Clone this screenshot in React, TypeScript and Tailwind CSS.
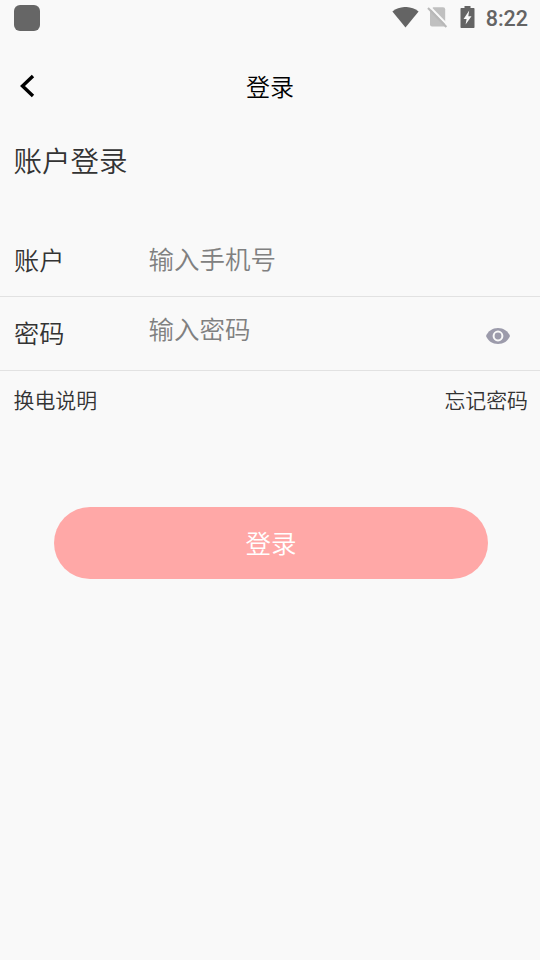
import { useState } from "react";

function StatusBar() {
  return (
    <div className="flex h-9 items-center justify-between pl-3.5 pr-3 text-[#646464]">
      <div className="h-[26px] w-[26px] rounded-md bg-[#666666]" />

      <div className="flex items-center">
        {/* wifi */}
        <svg className="mb-0.5" width="27" height="21" viewBox="0 0 27 21" fill="currentColor">
          <path d="M0.4 4.4C8 -1.5 19 -1.5 26.6 4.4L13.5 20.5Z" />
        </svg>

        {/* no sim */}
        <svg className="mb-0.5 ml-2" width="21" height="22" viewBox="0 0 21 22">
          <path
            d="M6.2 1.2H16Q18.2 1.2 18.2 3.4V20.6H5Q3 20.6 3 18.6V4.5Z"
            fill="#c0c0c0"
          />
          <path d="M2.8 0.8L21.6 20" stroke="#f9f9f9" strokeWidth="2" />
          <path d="M1 2L19.4 21" stroke="#b8b8b8" strokeWidth="2" />
        </svg>

        {/* battery */}
        <svg className="ml-3 mb-0.5" width="15" height="22" viewBox="0 0 15 22">
          <path
            d="M4.5 0H10.5V2H13.8Q14.5 2 14.5 2.7V21.3Q14.5 22 13.8 22H1.2Q0.5 22 0.5 21.3V2.7Q0.5 2 1.2 2H4.5Z"
            fill="currentColor"
          />
          <path d="M9.2 4.6L8.3 10.2H11.5L5.6 18.6L6.6 13H3.6Z" fill="#f9f9f9" />
        </svg>

        <span className="ml-[11px] pt-0.5 font-[Roboto] text-[21.5px] font-medium leading-[34px]">
          8:22
        </span>
      </div>
    </div>
  );
}

export default function App() {
  const [account, setAccount] = useState("");
  const [password, setPassword] = useState("");
  const [showPassword, setShowPassword] = useState(false);

  return (
    <div className="min-h-screen w-full bg-[#f9f9f9] font-['Noto_Sans_CJK_SC',sans-serif] font-[350] text-[#333333]">
      <StatusBar />

      {/* Header */}
      <header className="grid h-[100px] grid-cols-3 items-center">
        <button type="button" className="pl-5">
          <svg width="15" height="24" viewBox="0 0 15 24" fill="none">
            <path d="M13 2L2.5 12L13 22" stroke="#000000" strokeWidth="3.4" />
          </svg>
        </button>
        <h1 className="text-center text-2xl font-[350] text-black">登录</h1>
      </header>

      <h2 className="h-[87px] pl-[13.5px] text-[28.5px] font-[350] leading-[48px]">账户登录</h2>

      {/* Form */}
      <div className="flex h-[74px] items-center border-b border-[#e2e2e2] px-3.5">
        <label className="w-[134.5px] text-[25.2px]">账户</label>
        <input
          type="text"
          value={account}
          onChange={(e) => setAccount(e.target.value)}
          className="mb-0.5 min-w-0 flex-1 text-[25.5px] outline-none placeholder:text-[#808080]"
          placeholder="输入手机号"
        />
      </div>

      <div className="flex h-[74px] items-center border-b border-[#e2e2e2] px-3.5">
        <label className="w-[134.5px] pb-0.5 text-[25.2px]">密码</label>
        <input
          type={showPassword ? "text" : "password"}
          value={password}
          onChange={(e) => setPassword(e.target.value)}
          className="mb-2.5 min-w-0 flex-1 text-[25.5px] outline-none placeholder:text-[#808080]"
          placeholder="输入密码"
        />
        <button
          type="button"
          onClick={() => setShowPassword((prev) => !prev)}
          className="mr-4 mt-1"
        >
          <svg width="24" height="16" viewBox="0 0 24 16">
            <path
              d="M0 8C2 3 6.5 0 12 0S22 3 24 8C22 13 17.5 16 12 16S2 13 0 8Z"
              fill="#9c9bab"
            />
            <circle cx="12" cy="8" r="4.4" fill="#9c9bab" stroke="#f9f9f9" strokeWidth="2" />
          </svg>
        </button>
      </div>

      <div className="flex justify-between pl-[13.5px] pr-3 text-[20.9px] leading-[56px]">
        <a>换电说明</a>
        <a>忘记密码</a>
      </div>

      <button
        type="button"
        className="ml-[54px] mt-20 block h-[72px] w-[434px] rounded-full bg-[#ffa8a7] pb-0.5 text-[25.5px] text-white"
      >
        登录
      </button>
    </div>
  );
}
